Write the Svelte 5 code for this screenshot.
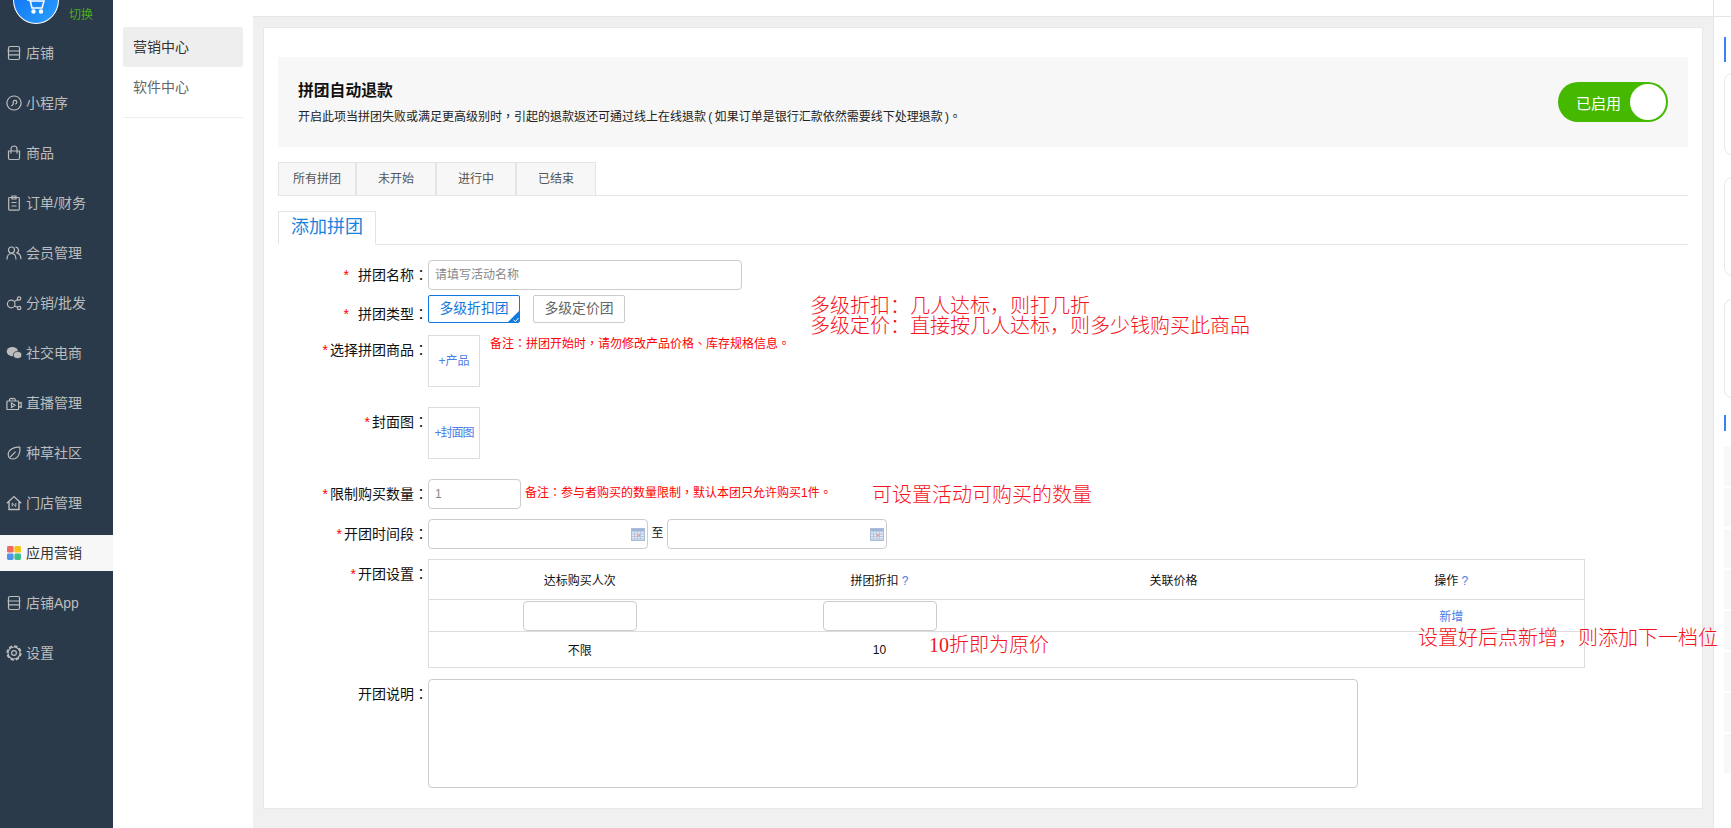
<script>
  const menu = [
    { t: '店铺', p: 'M2.5 6V3A1.5 1.5 0 0 1 4 1.5h8A1.5 1.5 0 0 1 13.5 3v3M1.5 6h13M2.5 6v7a1.5 1.5 0 0 0 1.5 1.5h8a1.5 1.5 0 0 0 1.5-1.5V6M2.5 9.8h11' },
    { t: '小程序', p: 'M8 1a7 7 0 1 0 .01 0zM5.2 10.6a1.8 1.8 0 0 0 2-1.8V7.2a1.8 1.8 0 1 1 1.8 1.8' },
    { t: '商品', p: 'M2.5 6h11v7a1.5 1.5 0 0 1-1.5 1.5H4A1.5 1.5 0 0 1 2.5 13zM5 8.5V4a3 3 0 0 1 6 0v4.5' },
    { t: '订单/财务', p: 'M3.5 2.5h9a.8.8 0 0 1 .8.8v11a.8.8 0 0 1-.8.8h-9a.8.8 0 0 1-.8-.8v-11a.8.8 0 0 1 .8-.8zM6 1h4v3H6zM5.5 7.5h5M5.5 11h5' },
    { t: '会员管理', p: 'M8.5 5a3 3 0 1 1-6 0 3 3 0 0 1 6 0zM1 14.5c0-3.5 1.8-6 4.5-6s4.5 2.5 4.5 6M9.5 2.2a3 3 0 0 1 1.5 5.6c2.5.7 4 3 4 6.5' },
    { t: '分销/批发', p: 'M9 9a3.8 3.8 0 1 1-7.6 0A3.8 3.8 0 0 1 9 9zM14.8 3.5a1.7 1.7 0 1 1-3.4 0 1.7 1.7 0 0 1 3.4 0zM14.8 13a1.7 1.7 0 1 1-3.4 0 1.7 1.7 0 0 1 3.4 0zM8 6.8l3.6-2.2M8 11l3.6 1.2' },
    { t: '社交电商', wx: true },
    { t: '直播管理', p: 'M1.5 6h10.5a.6.6 0 0 1 .6.6v7.3a.6.6 0 0 1-.6.6H1.5a.6.6 0 0 1-.6-.6V6.6a.6.6 0 0 1 .6-.6zM12.6 8.4l2.6-.9v4.8l-2.6-.9M5.5 8v4.5l3.6-2.2zM3.8 6a1.6 1.6 0 1 1 2.6-2 1.5 1.5 0 1 1 2.6 2' },
    { t: '种草社区', p: 'M13.8 2.2C14.8 8 12 14 6.8 14c-2.6 0-4.6-1.6-4.6-4.6 0-4.4 5-7.8 11.6-7.2zM4.2 12.2l5.4-5.6' },
    { t: '门店管理', house: true },
    { t: '应用营销', color: true, active: true },
    { t: '店铺App', p: 'M2.5 6V3A1.5 1.5 0 0 1 4 1.5h8A1.5 1.5 0 0 1 13.5 3v3M1.5 6h13M2.5 6v7a1.5 1.5 0 0 0 1.5 1.5h8a1.5 1.5 0 0 0 1.5-1.5V6M2.5 9.8h11' },
    { t: '设置', gear: true }
  ];
  const tabs = ['所有拼团', '未开始', '进行中', '已结束'];
  const sideRows = [0, 1, 2, 3, 4, 5, 6, 7];
</script>

{#snippet cal()}
  <svg class="cal" width="14" height="13" viewBox="0 0 14 13">
    <rect x="0.5" y="0.5" width="13" height="12" fill="#dfe7f3" stroke="#a9bcd8" />
    <rect x="1" y="1" width="12" height="2.5" fill="#9db5d8" />
    <path d="M1 6h12M1 8.5h12M1 11h12M3.5 3.5v9M6.5 3.5v9M9.5 3.5v9" stroke="#b6c6de" stroke-width="1" />
    <rect x="7" y="6.5" width="2" height="2" fill="#e89a8c" />
  </svg>
{/snippet}

<div class="app">
  <aside class="nav">
    <div class="brand">
      <div class="logo">
        <svg width="20" height="16" viewBox="0 0 20 16" fill="none" stroke="#fff" stroke-width="1.6">
          <path d="M1 1h3l2 8h10l2-7H5" />
          <circle cx="7.5" cy="12.5" r="1.4" fill="#fff" />
          <circle cx="15" cy="12.5" r="1.4" fill="#fff" />
        </svg>
      </div>
      <span class="switch">切换</span>
    </div>
    {#each menu as m}
      <div class="item" class:active={m.active}>
        <svg class="ico" width="16" height="16" viewBox="0 0 16 16" fill="none" stroke="#bdbdbd" stroke-width="1.2">
          {#if m.p}
            <path d={m.p} />
          {:else if m.wx}
            <ellipse cx="6.3" cy="6.6" rx="5.6" ry="4.6" fill="#bdbdbd" stroke="none" />
            <ellipse cx="11.6" cy="10" rx="4.2" ry="3.5" fill="#bdbdbd" stroke="#2a3a4a" stroke-width="0.8" />
          {:else if m.house}
            <path d="M.8 8.2L8 1.6l7.2 6.6M3 6.8v7.7h10V6.8" stroke-width="1.4" />
            <path d="M6.2 11.6V8l3.6 3.6V8" stroke-width="1" />
          {:else if m.color}
            <rect x="1" y="1" width="6.6" height="6.6" rx="1.4" fill="#f4695f" stroke="none" />
            <rect x="8.4" y="1" width="6.6" height="6.6" rx="1.4" fill="#f7c318" stroke="none" />
            <rect x="1" y="8.4" width="6.6" height="6.6" rx="1.4" fill="#4f94e8" stroke="none" />
            <rect x="8.4" y="8.4" width="6.6" height="6.6" rx="1.4" fill="#3fc08c" stroke="none" />
          {:else if m.gear}
            <circle cx="8" cy="8" r="6" />
            <circle cx="8" cy="8" r="7" stroke-width="1.4" stroke-dasharray="3.4 2.1" />
            <circle cx="8" cy="8" r="2.4" />
          {/if}
        </svg>
        <span>{m.t}</span>
      </div>
    {/each}
  </aside>

  <aside class="subnav">
    <div class="sub on">营销中心</div>
    <div class="sub">软件中心</div>
    <div class="subline"></div>
  </aside>

  <main class="main">
    <div class="topbar"></div>
    <section class="card">
      <div class="refund">
        <div>
          <h3>拼团自动退款</h3>
          <p>开启此项当拼团失败或满足更高级别时，引起的退款返还可通过线上在线退款 ( 如果订单是银行汇款依然需要线下处理退款 )。</p>
        </div>
        <div class="toggle"><span>已启用</span><i></i></div>
      </div>

      <div class="tabs">
        {#each tabs as t}<div class="tab">{t}</div>{/each}
      </div>

      <div class="addbar"><div class="addtab">添加拼团</div></div>

      <div class="row r-name">
        <div class="lab wide"><em>*</em>拼团名称<b>：</b></div>
        <div class="field name">请填写活动名称</div>
      </div>

      <div class="row r-type">
        <div class="lab wide low"><em>*</em>拼团类型<b>：</b></div>
        <button class="opt sel">多级折扣团
          <svg class="corner" width="13" height="13" viewBox="0 0 13 13">
            <path d="M13 0v13H0z" fill="#1178e0" />
            <path d="M6.5 10l2 1.6L11.5 8" fill="none" stroke="#fff" stroke-width="1" />
          </svg>
        </button>
        <button class="opt">多级定价团</button>
      </div>

      <div class="row r-prod">
        <div class="lab"><em>*</em>选择拼团商品<b>：</b></div>
        <div class="pick">+产品</div>
        <div class="note first">备注：拼团开始时，请勿修改产品价格、库存规格信息。</div>
      </div>

      <div class="row r-cover">
        <div class="lab"><em>*</em>封面图<b>：</b></div>
        <div class="pick tight">+封面图</div>
      </div>

      <div class="row r-qty">
        <div class="lab"><em>*</em>限制购买数量<b>：</b></div>
        <div class="field qty">1</div>
        <div class="note">备注：参与者购买的数量限制，默认本团只允许购买1件。</div>
      </div>

      <div class="row r-date">
        <div class="lab"><em>*</em>开团时间段<b>：</b></div>
        <div class="field date">{@render cal()}</div>
        <span class="to">至</span>
        <div class="field date">{@render cal()}</div>
      </div>

      <div class="row r-set">
        <div class="lab"><em>*</em>开团设置<b>：</b></div>
        <table>
          <colgroup><col class="c1" /><col class="c2" /><col class="c3" /><col class="c4" /></colgroup>
          <tbody>
            <tr class="h">
              <td>达标购买人次</td>
              <td>拼团折扣 <span class="q">?</span></td>
              <td>关联价格</td>
              <td>操作 <span class="q">?</span></td>
            </tr>
            <tr class="i">
              <td><div class="field cell"></div></td>
              <td><div class="field cell"></div></td>
              <td></td>
              <td class="link">新增</td>
            </tr>
            <tr class="v">
              <td>不限</td>
              <td>10</td>
              <td></td>
              <td></td>
            </tr>
          </tbody>
        </table>
      </div>

      <div class="row r-desc">
        <div class="lab">开团说明<b>：</b></div>
        <div class="field area"></div>
      </div>
    </section>
  </main>

  <aside class="right">
    <div class="rtop"></div>
    <div class="bar big"></div>
    <div class="rcard a"></div>
    <div class="rcard b"></div>
    <div class="rcard c"></div>
    <div class="bar small"></div>
    <div class="rrows">
      {#each sideRows as r (r)}<div class="rrow"></div>{/each}
    </div>
  </aside>

  <div class="mark m1">多级折扣：几人达标，则打几折<br />多级定价：直接按几人达标，则多少钱购买此商品</div>
  <div class="mark m2">可设置活动可购买的数量</div>
  <div class="mark m3">10折即为原价</div>
  <div class="mark m4">设置好后点新增，则添加下一档位</div>
</div>

<style>
  :global(body) { margin: 0; background: #fff; }
  .app {
    position: relative; display: flex; width: 1731px; height: 828px; overflow: hidden;
    font-family: "Liberation Sans", "Noto Sans CJK SC", sans-serif; font-size: 14px; color: #222;
  }

  .nav { flex: 0 0 113px; background: #2a3a4a; color: #bdbdbd; display: flex; flex-direction: column; }
  .brand { height: 35px; display: flex; position: relative; overflow: hidden; flex: none; }
  .logo {
    width: 44px; height: 46px; margin: -24px 0 0 13px; border-radius: 50%; flex: none; box-sizing: content-box;
    border: 1.5px solid #fff; background: linear-gradient(135deg, #0b6cf0, #2aa0ff);
    display: flex; justify-content: center; align-items: flex-end; padding-bottom: 0;
  }
  .logo svg { margin-bottom: 8px; }
  .switch { color: #4caf1a; font-size: 12px; margin: 6px 0 0 10px; line-height: 18px; }
  .item { height: 36px; margin-bottom: 14px; flex: none; display: flex; align-items: center; padding-left: 6px; line-height: 38px; }
  .item span { margin-left: 4px; }
  .ico { flex: none; }
  .item.active { background: #f7f7f7; color: #333; }

  .subnav { flex: 0 0 120px; padding: 27px 10px 0; background: #fff; }
  .sub { height: 40px; line-height: 40px; padding-left: 10px; color: #666; font-size: 14px; border-radius: 2px; }
  .sub.on { background: #eee; color: #333; }
  .subline { margin-top: 10px; border-top: 1px solid #eee; }

  .main { flex: 0 0 1460px; background: #f0f0f0; display: flex; flex-direction: column; }
  .topbar { height: 16px; background: #fff; border-bottom: 1px solid #e6e6e6; flex: none; }
  .card {
    margin: 10px 10px 0; height: 782px; box-sizing: border-box; background: #fff;
    border: 1px solid #e8e8e8; padding: 29px 14px 0;
  }

  .refund { height: 90px; background: #f7f7f7; padding: 0 20px; display: flex; align-items: center; justify-content: space-between; }
  .refund h3 { margin: 0 0 6px; font-size: 15.8px; line-height: 24px; color: #111; }
  .refund p { margin: 0; font-size: 12px; line-height: 16px; color: #222; font-family: "Liberation Sans", "Noto Sans CJK TC", sans-serif; word-spacing: -1px; }
  .toggle { width: 110px; height: 40px; box-sizing: border-box; border-radius: 20px; background: #45b800; color: #fff; font-size: 15px; display: flex; align-items: center; justify-content: space-between; padding: 0 2px 0 18px; }
  .toggle i { width: 36px; height: 36px; border-radius: 50%; background: #fff; display: block; }

  .tabs { margin-top: 15px; display: flex; border-bottom: 1px solid #e4e4e4; height: 33px; box-sizing: content-box; }
  .tab { width: 78px; height: 33px; box-sizing: border-box; background: #f7f7f7; border: 1px solid #e4e4e4; border-left-width: 1px; border-bottom: 0; text-align: center; line-height: 32px; font-size: 12px; color: #555; margin-right: 1px; margin-left: 0; }
  .tab + .tab { margin-left: -1px; width: 80px; }

  .addbar { margin-top: 15px; height: 33px; border-bottom: 1px solid #e4e4e4; }
  .addtab { width: 98px; height: 34px; box-sizing: border-box; border: 1px solid #e4e4e4; border-bottom: 1px solid #fff; background: #fff; color: #1a82dc; font-size: 18px; line-height: 31px; padding-left: 12px; }

  .row { display: flex; align-items: flex-start; }
  .r-name { margin-top: 15px; }
  .r-type { margin-top: 5px; }
  .r-prod { margin-top: 11px; }
  .r-cover { margin-top: 20px; }
  .r-qty { margin-top: 20px; }
  .r-date { margin-top: 10px; }
  .r-set { margin-top: 10px; }
  .r-desc { margin-top: 11px; }

  .lab { flex: 0 0 150px; text-align: right; font-size: 14px; line-height: 20px; padding-top: 4px; box-sizing: border-box; color: #111; white-space: nowrap; }
  .lab.wide em { margin-right: 9px; }
  .lab.low { padding-top: 8px; }
  .lab em { color: #f00; font-style: normal; font-size: 14px; margin-right: 2px; }
  .lab b { font-weight: 400; font-family: "Noto Sans CJK TC", sans-serif; }

  .field { box-sizing: border-box; border: 1px solid #ccc; border-radius: 4px; background: #fff; height: 30px; line-height: 28px; color: #888; font-size: 12px; padding-left: 6px; }
  .field.name { width: 314px; }
  .field.qty { width: 93px; }
  .field.date { width: 220px; position: relative; display: flex; align-items: center; justify-content: flex-end; padding-right: 2px; }
  .cal { display: block; }
  .to { width: 19px; text-align: center; line-height: 28px; font-size: 12px; color: #111; }
  .field.cell { width: 114px; margin: 0 auto; }
  .field.area { width: 930px; height: 109px; }

  .opt { position: relative; width: 92px; height: 28px; box-sizing: border-box; padding: 0; background: #fff; border: 1px solid #ccc; border-radius: 2px; font: inherit; font-size: 13.8px; line-height: 26px; color: #666; margin-right: 13px; overflow: hidden; }
  .opt.sel { border-color: #1178e0; color: #1178e0; }
  .corner { position: absolute; right: -1px; bottom: -1px; }

  .pick { width: 52px; height: 52px; box-sizing: border-box; border: 1px solid #ddd; color: #4a7ee8; font-size: 12px; text-align: center; line-height: 50px; white-space: nowrap; flex: none; }
  .pick.tight { letter-spacing: -1px; font-size: 12px; }
  .note { color: #f00; font-size: 12px; line-height: 16px; margin-left: 4px; padding-top: 6px; font-family: "Liberation Sans", "Noto Sans CJK TC", sans-serif; white-space: nowrap; }
  .note.first { margin-left: 10px; padding-top: 1px; }

  table { border-collapse: collapse; width: 1156px; table-layout: fixed; font-size: 12px; color: #111; }
  .c1 { width: 302px; } .c2 { width: 298px; } .c3 { width: 290px; } .c4 { width: 266px; }
  td { border-top: 1px solid #ddd; border-bottom: 1px solid #ddd; text-align: center; padding: 0; }
  td:first-child { border-left: 1px solid #ddd; }
  td:last-child { border-right: 1px solid #ddd; }
  .h td { height: 39px; }
  .i td { height: 31px; }
  .v td { height: 35px; }
  .q { color: #4a7ee8; }
  .link { color: #4a7ee8; }

  .right { flex: 1; min-width: 0; box-sizing: border-box; border-left: 1px solid #e6e6e6; overflow: hidden; background: #fff; padding-left: 10px; }
  .rtop { height: 16px; border-bottom: 1px solid #e6e6e6; margin-left: -10px; }
  .bar { width: 2px; background: #3a82f0; }
  .bar.big { height: 25px; margin-top: 20px; }
  .bar.small { height: 16px; margin-top: 17px; }
  .rcard { width: 40px; box-sizing: border-box; border: 1px solid #e8e8e8; border-radius: 8px; background: #fff; }
  .rcard.a { height: 82px; margin-top: 11px; }
  .rcard.b { height: 99px; margin-top: 22px; }
  .rcard.c { height: 99px; margin-top: 23px; }
  .rrows { margin-top: 16px; display: flex; flex-direction: column; gap: 2px; }
  .rrow { height: 39px; background: #f8f8f8; }

  .mark { position: absolute; color: #f5141e; font-size: 20px; line-height: 20px; font-weight: 300; white-space: nowrap; font-family: "Liberation Serif", "Noto Sans CJK SC", sans-serif; }
  .m1 { left: 810px; top: 296px; }
  .m2 { left: 872px; top: 485px; }
  .m3 { left: 929px; top: 635px; }
  .m4 { left: 1418px; top: 628px; }
</style>
